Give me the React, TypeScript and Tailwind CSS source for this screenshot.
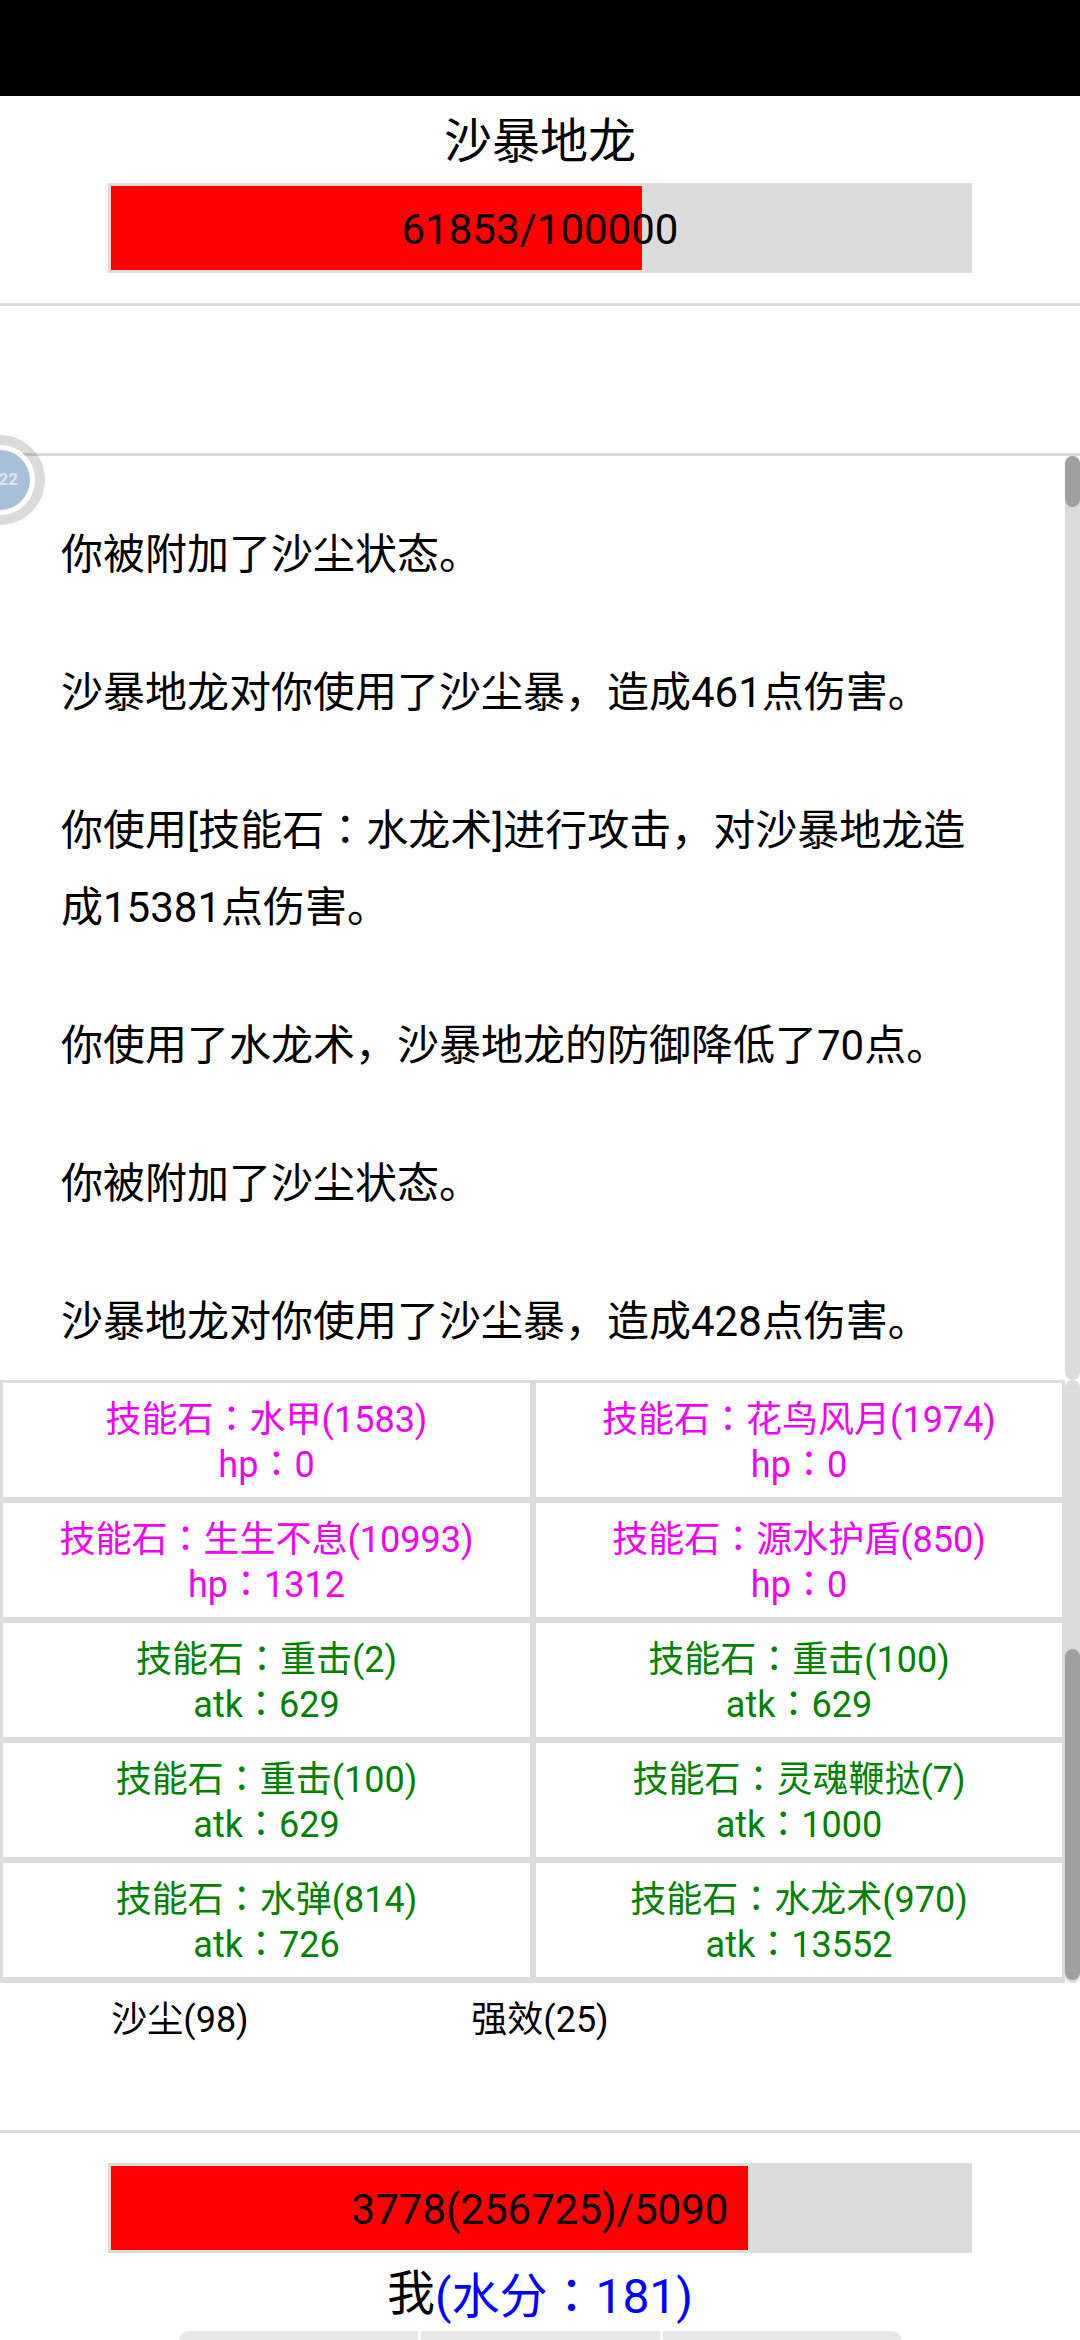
const cjk = { fontFamily: 'Roboto, "Noto Sans CJK SC", sans-serif' };
const jp = { fontFamily: '"Noto Sans CJK JP", sans-serif' };

const logs = [
  '你被附加了沙尘状态。',
  '沙暴地龙对你使用了沙尘暴，造成461点伤害。',
  '你使用[技能石：水龙术]进行攻击，对沙暴地龙造成15381点伤害。',
  '你使用了水龙术，沙暴地龙的防御降低了70点。',
  '你被附加了沙尘状态。',
  '沙暴地龙对你使用了沙尘暴，造成428点伤害。',
];

const skills = [
  { name: '技能石：水甲(1583)', stat: 'hp：0', heal: true },
  { name: '技能石：花鸟风月(1974)', stat: 'hp：0', heal: true },
  { name: '技能石：生生不息(10993)', stat: 'hp：1312', heal: true },
  { name: '技能石：源水护盾(850)', stat: 'hp：0', heal: true },
  { name: '技能石：重击(2)', stat: 'atk：629', heal: false },
  { name: '技能石：重击(100)', stat: 'atk：629', heal: false },
  { name: '技能石：重击(100)', stat: 'atk：629', heal: false },
  { name: '技能石：灵魂鞭挞(7)', stat: 'atk：1000', heal: false },
  { name: '技能石：水弹(814)', stat: 'atk：726', heal: false },
  { name: '技能石：水龙术(970)', stat: 'atk：13552', heal: false },
];

// the full-width colon sits centred in the reference, as in the JP cut
function Label({ text }: { text: string }) {
  const [head, tail] = text.split('：');
  return (
    <span>
      {head}
      <span className="leading-none" style={jp}>：</span>
      {tail}
    </span>
  );
}

function HpBar({ value, percent }: { value: string; percent: number }) {
  return (
    <div className="relative mx-auto h-[90px] w-[864px] border-[3px] border-[#dcdcdc] bg-[#dcdcdc]">
      <div className="h-full bg-[#ff0000]" style={{ width: `${percent}%` }} />
      <div className="absolute inset-0 flex items-center justify-center pt-[2px] text-[42px] text-black">{value}</div>
    </div>
  );
}

export default function App() {
  return (
    <div className="relative h-[2340px] w-[1080px] overflow-hidden bg-white" style={cjk}>
      <div className="h-[96px] bg-black" />

      <div className="h-[207px]">
        <div className="flex h-[87px] items-center justify-center pt-[5px] text-[48px] leading-none text-black">沙暴地龙</div>
        <HpBar value="61853/100000" percent={61.853} />
      </div>
      <div className="h-[3px] bg-[#dcdcdc]" />
      <div className="h-[147px]" />
      <div className="h-[3px] bg-[#dcdcdc]" />

      <div className="flex h-[924px]">
        <div className="flex-1 overflow-hidden pl-[61px] pr-[75px] pt-[61px] text-[42px] leading-[76.8px] text-black">
          {logs.map((line) => (
            <p key={line} className="mb-[61.2px]">{line.includes('：') ? <Label text={line} /> : line}</p>
          ))}
        </div>
        <div className="w-[15px] shrink-0 rounded-[8px] bg-[#dcdcdc]">
          <div className="h-[51px] rounded-[8px] bg-[#a0a0a0]" />
        </div>
      </div>

      <div className="flex h-[603px]">
        <div className="grid flex-1 grid-cols-[527px_526px] content-start gap-[6px] bg-[#dcdcdc] pb-[6px] pl-[3px] pr-[3px] pt-[3px]">
          {skills.map((skill) => (
            <div
              key={skill.name + skill.stat}
              className={`flex h-[114px] flex-col items-center justify-center bg-white pt-[5px] text-[36px] leading-[45px] ${skill.heal ? 'text-[#f000f0]' : 'text-[#008000]'}`}
            >
              <Label text={skill.name} />
              <Label text={skill.stat} />
            </div>
          ))}
        </div>
        <div className="w-[15px] shrink-0 rounded-[8px] bg-[#dcdcdc] pt-[269px]">
          <div className="h-[331px] rounded-[8px] bg-[#a0a0a0]" />
        </div>
      </div>

      <div className="grid h-[147px] grid-cols-3 pt-[15px] text-center text-[36px] leading-[45px] text-black">
        <span>沙尘(98)</span>
        <span>强效(25)</span>
      </div>
      <div className="h-[3px] bg-[#dcdcdc]" />

      <div className="pt-[30px]">
        <HpBar value="3778(256725)/5090" percent={74.22} />
        <div className="flex h-[78px] items-center justify-center pt-[4px] text-[48px] leading-none">
          <span className="text-black">我</span>
          <span className="text-[#0000ff]">
            (<Label text="水分：181" />)
          </span>
        </div>
      </div>

      <div className="mx-auto flex h-[40px] w-[723px] gap-[3px] overflow-hidden rounded-t-[10px]">
        <div className="flex-1 bg-[#e8e8e8]" />
        <div className="flex-1 bg-[#e8e8e8]" />
        <div className="flex-1 bg-[#e8e8e8]" />
      </div>

      {/* floating ball on the left edge */}
      <div className="absolute left-[-45px] top-[435px] flex h-[90px] w-[90px] items-center justify-center rounded-full border-[10px] border-black/[0.14] bg-clip-padding">
        <div className="flex h-[70px] w-[70px] items-center justify-center rounded-full bg-white/70">
          <div className="flex h-[60px] w-[60px] items-center justify-end rounded-full bg-[#a9c0dc] pr-[12px] text-[17px] font-bold text-[#dde6f0]">22</div>
        </div>
      </div>
    </div>
  );
}
